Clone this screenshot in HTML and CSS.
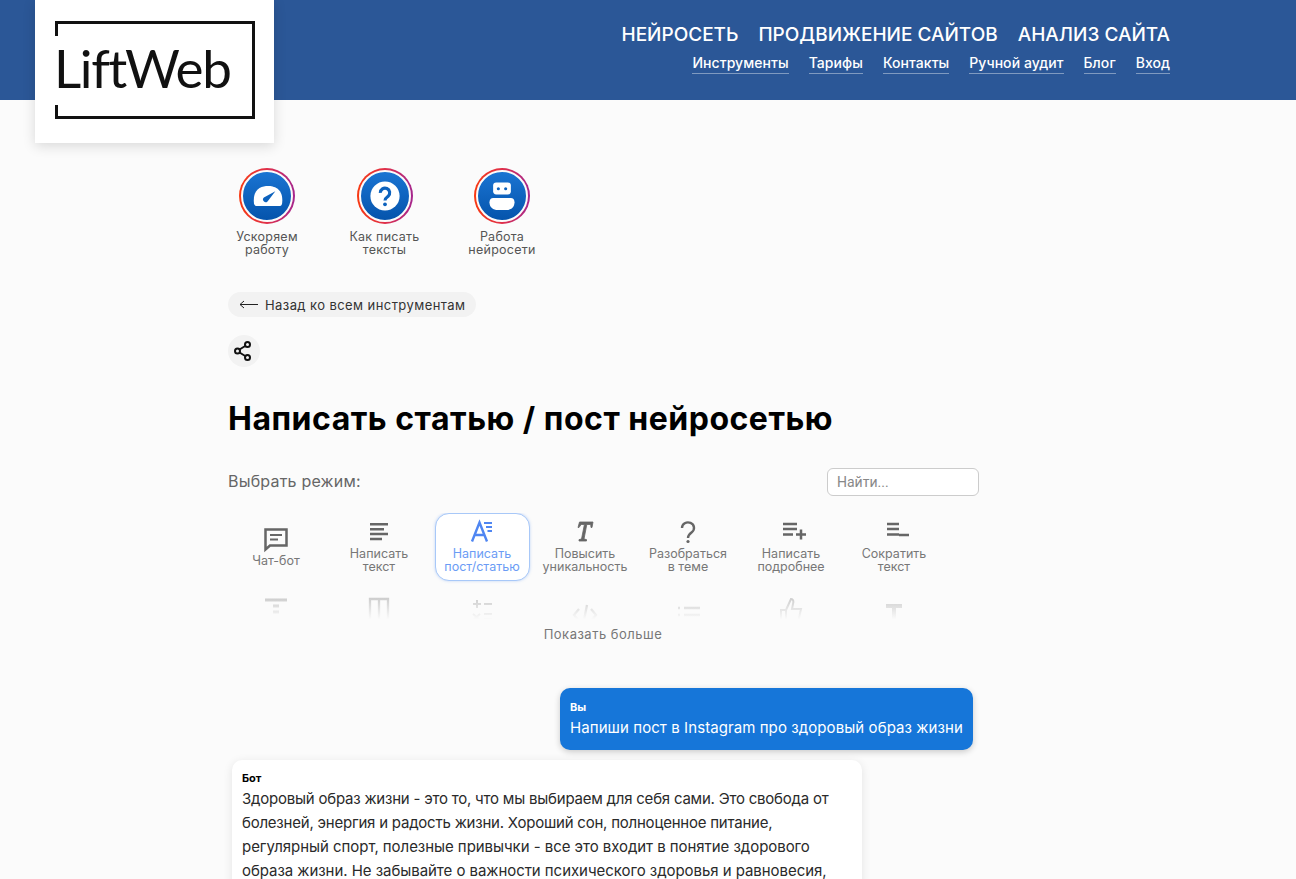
FILE: index.html
```
<!DOCTYPE html>
<html lang="ru">
<head>
<meta charset="utf-8">
<title>Написать статью / пост нейросетью</title>
<link rel="stylesheet" href="styles.css">
</head>
<body>
<header class="header">
  <a class="logo">
    <svg class="logo-frame" viewBox="0 0 200 98" aria-hidden="true"><path d="M1.500 15V1.500H198.500V96.500H1.500V84" fill="none" stroke="#111" stroke-width="3"/></svg>
    <span class="logo-text">LiftWeb</span>
  </a>
  <nav class="nav">
    <div class="nav-main"><a>НЕЙРОСЕТЬ</a><a>ПРОДВИЖЕНИЕ САЙТОВ</a><a>АНАЛИЗ САЙТА</a></div>
    <div class="nav-sub"><a>Инструменты</a><a>Тарифы</a><a>Контакты</a><a>Ручной аудит</a><a>Блог</a><a>Вход</a></div>
  </nav>
</header>
<main class="page">
  <section class="stories">
    <div class="story">
      <div class="ring"><div class="disc">
        <svg viewBox="0 0 46 46"><path d="M10.500 30C9 16 18 13.500 24 13.500s15 2.500 13.500 16.500c-.2 1.500-1 2.500-2 2.500H12.500c-1 0-1.800-1-2-2.500z" fill="#fff"/><path d="M20 24.500L31 18.500 23.500 28.200a2.400 2.400 0 0 1-3.500-3.700z" fill="#0d62bd"/></svg>
      </div></div>
      <span>Ускоряем<br>работу</span>
    </div>
    <div class="story">
      <div class="ring"><div class="disc">
        <svg viewBox="0 0 46 46"><circle cx="23" cy="23" r="14" fill="#fff"/><path d="M18.500 20a4.500 4.500 0 1 1 7.500 3.300c-1.700 1.300-3 2-3 4" fill="none" stroke="#0d62bd" stroke-width="3"/><circle cx="23" cy="31" r="1.800" fill="#0d62bd"/></svg>
      </div></div>
      <span>Как писать<br>тексты</span>
    </div>
    <div class="story">
      <div class="ring"><div class="disc">
        <svg viewBox="0 0 46 46"><rect x="14.500" y="10" width="17" height="11.500" rx="3" fill="#fff"/><circle cx="19.500" cy="16" r="1.500" fill="#0d62bd"/><circle cx="26.500" cy="16" r="1.500" fill="#0d62bd"/><path d="M11 29c0-2.500 1.500-4 3.500-4h17c2 0 3.500 1.500 3.500 4 0 5-3.500 7.500-8 7.500h-8c-4.500 0-8-2.500-8-7.500z" fill="#fff"/></svg>
      </div></div>
      <span>Работа<br>нейросети</span>
    </div>
  </section>

  <a class="back">
    <svg class="back-arrow" viewBox="0 0 19 9"><path d="M19 4.500H1M5 1L1 4.500 5 8" fill="none" stroke="#222" stroke-width="1"/></svg>
    Назад ко всем инструментам
  </a>

  <button class="share" aria-label="Поделиться">
    <svg viewBox="1.500 0 20 20" class="share-icon"><path d="M7 8.500l6.500-4M7 11.500l6.500 4" stroke="#111" stroke-width="2"/><g fill="none" stroke="#111" stroke-width="2"><circle cx="15" cy="3.500" r="2.500"/><circle cx="5" cy="10" r="2.500"/><circle cx="15" cy="16.500" r="2.500"/></g></svg>
  </button>

  <h1 class="title">Написать статью / пост нейросетью</h1>

  <div class="mode-head">
    <span class="mode-label">Выбрать режим:</span>
    <input class="search" type="text" placeholder="Найти...">
  </div>

  <div class="modes">
    <div class="mode-grid">
      <div class="tile">
        <svg viewBox="0 0 24 24"><path d="M1.500 1.500h21v16H6l-4.500 4z" fill="none" stroke="#666" stroke-width="2.500"/><path d="M6 7h12M6 11.500h8" stroke="#666" stroke-width="2"/></svg>
        <span>Чат-бот</span>
      </div>
      <div class="tile">
        <svg viewBox="0 0 24 24"><path d="M3 3.200h18M3 8.200h14M3 13h18M3 18h12" stroke="#666" stroke-width="2.500"/></svg>
        <span>Написать<br>текст</span>
      </div>
      <div class="tile active">
        <svg viewBox="0 0 24 24"><path d="M2 20.500L9.500 1.500l7.500 19M4.800 14h9.500" fill="none" stroke="#4f86f2" stroke-width="2.400"/><path d="M14 2h8M16 6h6M17.500 10H22" stroke="#4f86f2" stroke-width="1.800"/></svg>
        <span>Написать<br>пост/статью</span>
      </div>
      <div class="tile">
        <svg viewBox="0 0 24 24"><path d="M6.500 1H20l-1 5.500h-1l-.3-3h-3.900L11 18l2.500.6v1.400H6v-1.400l2.500-.6 2.900-14.500H8.100L6 6.500H5z" fill="#666" stroke="#666" stroke-width=".8"/></svg>
        <span>Повысить<br>уникальность</span>
      </div>
      <div class="tile">
        <svg viewBox="0 0 24 24"><path d="M6 7a6 5.500 0 1 1 9.800 4.200C13.500 13 12 14 12 17" fill="none" stroke="#666" stroke-width="2.400"/><circle cx="12" cy="20.500" r="1.600" fill="#666"/></svg>
        <span>Разобраться<br>в теме</span>
      </div>
      <div class="tile">
        <svg viewBox="0 0 24 24"><path d="M4 3h14M4 8h14M4 13.500h10M17 13.500h10M22 8.500v10" stroke="#666" stroke-width="2.500"/></svg>
        <span>Написать<br>подробнее</span>
      </div>
      <div class="tile">
        <svg viewBox="0 0 24 24"><path d="M5 3h12M5 8h12M5 13.500h12M17 14h10" stroke="#666" stroke-width="2.500"/></svg>
        <span>Сократить<br>текст</span>
      </div>
      <div class="tile tile-clipped">
        <svg viewBox="0 0 24 24"><path d="M1 3h22M9 9h6M9 15h6" stroke="#666" stroke-width="3"/></svg>
      </div>
      <div class="tile tile-clipped">
        <svg viewBox="0 0 24 24"><path d="M3 2h18v24H3zM12 2v24" fill="none" stroke="#666" stroke-width="2.300"/></svg>
      </div>
      <div class="tile tile-clipped">
        <svg viewBox="0 0 24 24"><path d="M3 7h8M7 3v8M14 7h8M3 17l7 6M10 17l-7 6M14 17h8M14 22h8" stroke="#666" stroke-width="2"/></svg>
      </div>
      <div class="tile tile-clipped">
        <svg viewBox="0 0 24 24"><path d="M6 12l-5 6 5 6M18 12l5 6-5 6M14 8l-4 20" fill="none" stroke="#666" stroke-width="2.300"/></svg>
      </div>
      <div class="tile tile-clipped">
        <svg viewBox="0 0 24 24"><path d="M2 11h2M8 11h16M2 18h2M8 18h16" stroke="#666" stroke-width="2.300"/></svg>
      </div>
      <div class="tile tile-clipped">
        <svg viewBox="0 0 24 24"><path d="M2 13h5v13H2zM7 13l5-11c2 0 3 2 2 5l-1 5h9l-3 14H7z" fill="none" stroke="#666" stroke-width="2"/></svg>
      </div>
      <div class="tile tile-clipped">
        <svg viewBox="0 0 24 24"><path d="M4 9h16M12 9v18" stroke="#666" stroke-width="4"/></svg>
      </div>
    </div>
    <div class="modes-fade"></div>
  </div>
  <a class="more">Показать больше</a>

  <section class="chat">
    <div class="msg msg-user">
      <b>Вы</b>
      <p>Напиши пост в Instagram про здоровый образ жизни</p>
    </div>
    <div class="msg msg-bot">
      <b>Бот</b>
      <p>Здоровый образ жизни - это то, что мы выбираем для себя сами. Это свобода от<br>болезней, энергия и радость жизни. Хороший сон, полноценное питание,<br><span class="wide">регулярный спорт, полезные привычки - все это входит в понятие здорового<br>образа жизни. Не забывайте о важности психического здоровья и равновесия,</span></p>
    </div>
  </section>
</main>
</body>
</html>
```
FILE: styles.css
```
* { box-sizing: border-box; }
html, body { margin: 0; padding: 0; }
body {
  background: #fbfbfb;
  font-family: Inter, "Noto Sans", sans-serif;
  color: #222;
  overflow-x: hidden;
}
a { color: inherit; text-decoration: none; }

.header {
  height: 100px;
  background: #2b5797;
  display: flex;
  justify-content: space-between;
  padding: 0 126px 0 35px;
}
.logo {
  position: relative;
  z-index: 2;
  flex: none;
  width: 239px;
  height: 143px;
  background: #fff;
  box-shadow: 0 3px 12px rgba(0, 0, 0, .14);
  display: flex;
  align-items: center;
  padding: 0 0 8px 19px;
}
.logo-frame { position: absolute; left: 20px; top: 21px; width: 200px; height: 98px; }
.logo-text {
  font-family: Lato, sans-serif;
  font-weight: 400;
  font-size: 53px;
  line-height: 1;
  color: #111;
  letter-spacing: -1.400px;
}
.nav { display: flex; flex-direction: column; align-items: flex-end; padding-top: 24px; color: #fff; }
.nav-main { display: flex; gap: 20px; font-size: 19px; line-height: 22px; font-weight: 500; }
.nav-sub { display: flex; gap: 20px; margin-top: 8px; font-size: 14px; line-height: 17px; font-weight: 500; letter-spacing: .06px; }
.nav-sub a { border-bottom: 1px solid rgba(255, 255, 255, .4); padding-bottom: 2px; }

.page { width: 750px; margin-left: 228px; }

.stories { display: flex; padding-top: 68px; gap: 37.500px; margin-left: -1px; }
.story {
  width: 80px;
  display: flex;
  flex-direction: column;
  align-items: center;
  font-size: 12.500px;
  line-height: 13px;
  letter-spacing: .25px;
  color: #555;
  text-align: center;
}
.ring {
  width: 56px;
  height: 56px;
  border-radius: 50%;
  padding: 2px;
  background: linear-gradient(90deg, #f83a12, #e0304a 50%, #a5268e);
}
.disc {
  width: 52px;
  height: 52px;
  border-radius: 50%;
  border: 2px solid #fbfbfb;
  background: linear-gradient(180deg, #1a74d2, #0554ac);
}
.disc svg { display: block; width: 48px; height: 48px; }
.story span { margin-top: 6px; }

.back {
  display: inline-flex;
  align-items: center;
  gap: 7px;
  margin-top: 36px;
  height: 25px;
  padding: 0 11px;
  border-radius: 13px;
  background: #f2f2f2;
  font-size: 13px;
  letter-spacing: .42px;
  color: #333;
}
.back-arrow { width: 19px; height: 9px; }
.share {
  display: flex;
  align-items: center;
  justify-content: center;
  margin-top: 18px;
  width: 32px;
  height: 32px;
  padding: 0;
  border: 0;
  border-radius: 50%;
  background: #f2f2f2;
}
.share-icon { width: 20px; height: 20px; }
.title {
  margin: 32px 0 0;
  font-size: 32px;
  line-height: 40px;
  font-weight: 700;
  letter-spacing: .5px;
  color: #000;
}
.mode-head {
  display: flex;
  justify-content: space-between;
  align-items: center;
  margin-top: 29px;
  width: 751px;
}
.mode-label { padding-bottom: 2px; font-size: 16px; letter-spacing: .2px; color: #666; }
.search {
  width: 152px;
  height: 28px;
  padding: 0 9px;
  border: 1px solid #ccc;
  border-radius: 6px;
  background: #fff;
  font: 14px Roboto, sans-serif;
  outline: 0;
}
.search::placeholder { color: #888; opacity: 1; }

.modes {
  position: relative;
  margin-top: 17px;
  height: 112px;
  overflow: hidden;
}
.mode-grid {
  display: grid;
  grid-template-columns: repeat(7, 95px);
  grid-auto-rows: 68px;
  gap: 8px;
  margin-left: .500px;
}
.tile {
  display: flex;
  flex-direction: column;
  align-items: center;
  justify-content: center;
  gap: 2px;
  border: 1px solid transparent;
  border-radius: 14px;
  font-size: 12.500px;
  line-height: 13px;
  color: #777;
  text-align: center;
  white-space: nowrap;
}
.tile svg { flex: none; display: block; width: 24px; height: 24px; overflow: visible; }
.tile-clipped { justify-content: flex-start; padding-top: 7px; }
.tile.active {
  color: #6b9cf5;
  border-color: #a8c8f8;
  box-shadow: 0 0 3px rgba(80, 140, 240, .35);
  background: #fff;
}
.modes-fade {
  position: absolute;
  left: 0;
  right: 0;
  top: 75px;
  bottom: 0;
  background: linear-gradient(180deg, rgba(251, 251, 251, .55), #fbfbfb 85%);
}
.more {
  display: block;
  margin-top: 0;
  text-align: center;
  font-size: 13px;
  line-height: 18px;
  letter-spacing: .5px;
  color: #777;
}

.chat { display: flex; flex-direction: column; margin-top: 45px; }
.msg { border-radius: 10px; }
.msg b { display: block; margin-bottom: 2px; font-size: 11px; line-height: 14px; font-weight: 700; }
.msg p { margin: 0; font-size: 15px; line-height: 24px; }
.msg-user {
  align-self: flex-end;
  margin-right: 5px;
  width: 413px;
  height: 62px;
  padding: 12px 10px 0;
  background: #1676d9;
  color: #fff;
  box-shadow: 0 2px 6px rgba(0, 0, 0, .2);
}
.msg-user p { letter-spacing: .08px; }
.msg-bot {
  margin: 10px 0 0 4px;
  width: 630px;
  padding: 11px 10px 12px;
  background: #fff;
  color: #2a2a2a;
  box-shadow: 0 2px 10px rgba(0, 0, 0, .1);
}
.msg-bot p { letter-spacing: -.22px; }
.msg-bot .wide { letter-spacing: -.05px; }
.msg-bot b { color: #000; }
```
